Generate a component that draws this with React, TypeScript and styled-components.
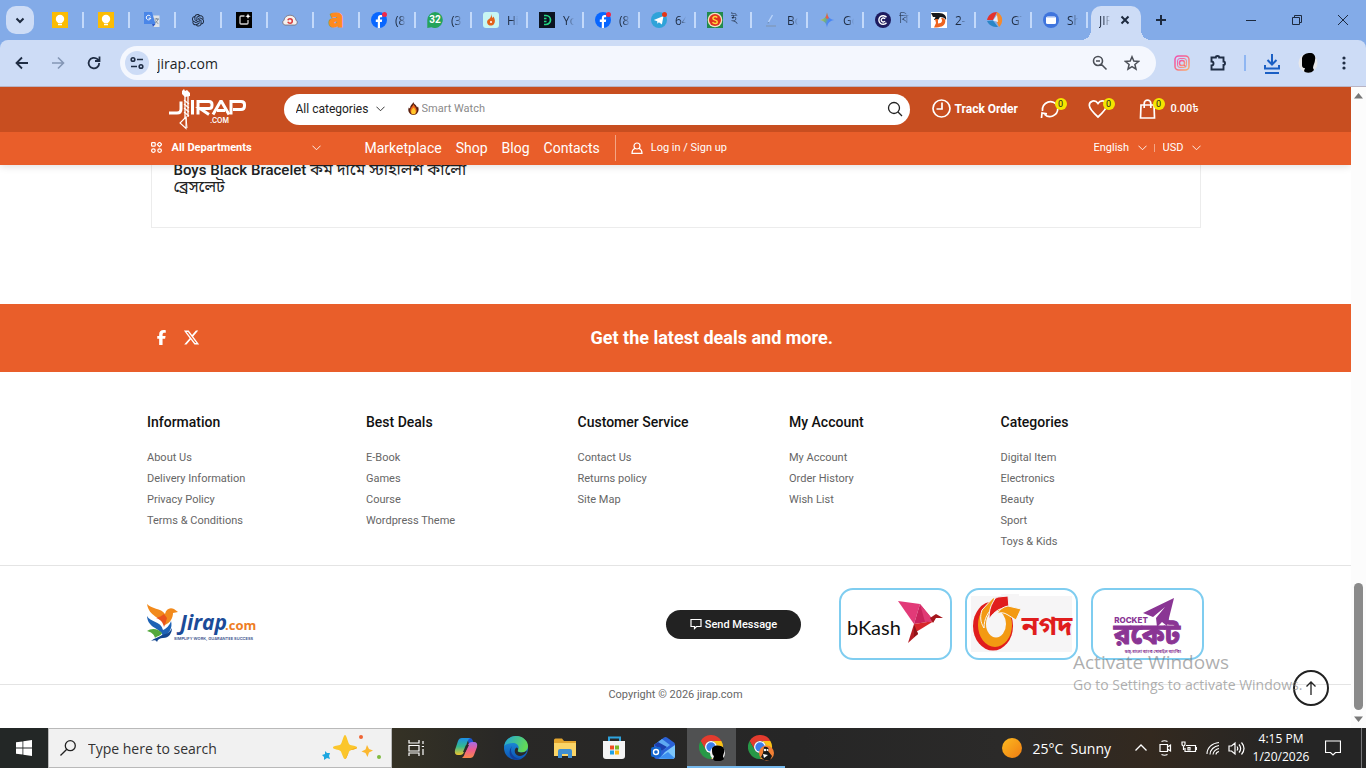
import React from 'react';
import styled, { createGlobalStyle } from 'styled-components';
import { AiOutlineOpenAI } from 'react-icons/ai';
import { FaFacebookF, FaXTwitter } from 'react-icons/fa6';

const ui = `"Open Sans", "Noto Sans", sans-serif`;
const site = `Roboto, "Noto Sans Bengali", "Noto Sans", sans-serif`;
const orange = '#e95e2a';

const GlobalStyle = createGlobalStyle`
  *, *::before, *::after { box-sizing: border-box; }
  body { margin: 0; background: #fff; font-family: ${site}; }
  button, input, select { font: inherit; color: inherit; margin: 0; padding: 0; border: 0; background: none; outline: none; }
  button { display: inline-flex; align-items: center; justify-content: center; cursor: pointer; }
  select { appearance: none; }
  a { color: inherit; text-decoration: none; }
  ul { list-style: none; margin: 0; padding: 0; }
  h2, h3, p { margin: 0; }
  svg { display: block; flex: none; }
`;

const Desktop = styled.div`
  display: flex;
  flex-direction: column;
  height: 100vh;
  overflow: hidden;
`;

/* ---------- browser window ---------- */

const BrowserFrame = styled.div`
  flex: none;
  background: #83abe8;
`;

const TabStrip = styled.div`
  display: flex;
  height: 40px;
  padding-left: 6px;
  font-family: ${ui};
  color: #1d2a3f;
`;

const TabSearch = styled.button`
  width: 28px;
  height: 28px;
  margin: 6px 4px 0 0;
  border-radius: 10px;
  background: #cddcf6;
`;

const Tab = styled.a<{ $wide?: boolean }>`
  display: flex;
  align-items: center;
  gap: 8px;
  width: ${(p) => (p.$wide ? 56 : 46)}px;
  height: 40px;
  padding-left: ${(p) => (p.$wide ? 11 : 14)}px;
  font-size: 12px;
  &::after {
    content: '';
    width: 2px;
    height: 16px;
    margin-left: auto;
    background: #c3d9fa;
  }
`;

const TabTitle = styled.span`
  width: 11px;
  margin-right: -8px;
  overflow: hidden;
  white-space: nowrap;
  mask-image: linear-gradient(90deg, #000 40%, transparent);
`;

const ActiveTab = styled.div`
  position: relative;
  display: flex;
  align-items: center;
  gap: 18px;
  width: 50px;
  height: 34px;
  margin: 6px 0 0 3px;
  padding: 0 0 6px 8px;
  border-radius: 10px 10px 0 0;
  background: #cddcf6;
  font-size: 12px;
  &::before, &::after {
    content: '';
    position: absolute;
    bottom: 0;
    width: 10px;
    height: 10px;
  }
  &::before { left: -10px; background: radial-gradient(circle at 0 0, transparent 10px, #cddcf6 10px); }
  &::after { right: -10px; background: radial-gradient(circle at 100% 0, transparent 10px, #cddcf6 10px); }
`;

const NewTab = styled.button`
  width: 28px;
  height: 28px;
  margin: 6px 0 0 6px;
`;

const WindowControls = styled.div`
  display: flex;
  margin-left: auto;
`;

const WindowButton = styled.button`
  width: 46px;
  height: 40px;
`;

const Toolbar = styled.div`
  display: flex;
  align-items: center;
  height: 47px;
  padding: 0 4px;
  border-bottom: 1px solid #b9b4c4;
  border-radius: 8px 8px 0 0;
  background: #cddcf6;
  color: #1f2d44;
  font-family: ${ui};
`;

const ToolButton = styled.button<{ $muted?: boolean }>`
  width: 36px;
  height: 34px;
  color: ${(p) => (p.$muted ? '#8496b5' : 'inherit')};
`;

const AddressBar = styled.label`
  display: flex;
  flex: 1;
  align-items: center;
  gap: 8px;
  height: 34px;
  margin: 0 8px;
  padding: 0 12px 0 5px;
  border-radius: 17px;
  background: #f4f7fe;
`;

const SiteInfo = styled.span`
  display: grid;
  place-items: center;
  width: 24px;
  height: 24px;
  border-radius: 50%;
  background: #cddcf6;
`;

const AddressInput = styled.input`
  flex: 1;
  min-width: 0;
  font-size: 14px;
  color: #1c1f26;
`;

const AddressButton = styled.button`
  width: 24px;
  height: 24px;
  color: #4b4f57;
`;

const ToolDivider = styled.span`
  width: 2px;
  height: 16px;
  margin: 0 8px;
  background: #8fb6f2;
`;

const Viewport = styled.div`
  display: flex;
  flex: 1;
  min-height: 0;
`;

const ScrollRail = styled.div`
  display: flex;
  flex: none;
  flex-direction: column;
  align-items: center;
  justify-content: space-between;
  width: 15px;
  padding: 6px 0;
  background: #fcfcfc;
`;

const ScrollThumb = styled.div`
  width: 9px;
  height: 127px;
  margin: auto 0 6px;
  border-radius: 5px;
  background: #8a8a8a;
`;

/* ---------- shop page ---------- */

const Page = styled.div`
  position: relative;
  display: flex;
  flex: 1;
  flex-direction: column;
  min-width: 0;
  overflow: hidden;
  background: #fff;
  color: #222;
`;

const Container = styled.div`
  display: flex;
  align-items: center;
  width: 100%;
  max-width: 1050px;
  margin: 0 auto;
`;

const SiteHeader = styled.header`
  position: relative;
  z-index: 1;
  flex: none;
  color: #fff;
  box-shadow: 0 1px 8px rgba(0, 0, 0, 0.14);
`;

const HeaderTop = styled.div`
  background: #c84e20;
  ${Container} { height: 45px; }
`;

const HeaderNav = styled.div`
  background: ${orange};
  ${Container} { height: 33px; padding-bottom: 2px; }
`;

const LogoLink = styled.a`
  width: 133px;
  padding-left: 16px;
`;

const SearchForm = styled.form`
  display: flex;
  flex: 1;
  align-items: center;
  height: 31px;
  padding: 0 7px 2px 12px;
  border-radius: 16px;
  background: #fff;
  color: #222;
`;

const CategorySelect = styled.select`
  width: 80px;
  font-size: 12px;
`;

const SearchInput = styled.input`
  flex: 1;
  min-width: 0;
  margin-left: 3px;
  font-size: 11px;
  &::placeholder { color: #8a8a8a; opacity: 1; }
`;

const HeaderActions = styled.div`
  display: flex;
  align-items: center;
  width: 291px;
  padding: 0 0 2px 22px;
`;

const TrackLink = styled.a`
  display: flex;
  align-items: center;
  gap: 4px;
  width: 108px;
  font-size: 12px;
  font-weight: 700;
  white-space: nowrap;
`;

const CounterLink = styled.a<{ $space: number }>`
  position: relative;
  display: flex;
  width: ${(p) => p.$space}px;
`;

const Counter = styled.span`
  position: absolute;
  top: -1px;
  left: 15px;
  width: 12px;
  height: 12px;
  border-radius: 50%;
  background: #f4e600;
  color: #222;
  font-size: 9px;
  line-height: 12px;
  text-align: center;
`;

const Amount = styled.span`
  font-size: 11px;
  font-weight: 500;
`;

const Departments = styled.button`
  gap: 10px;
  width: 170px;
  margin-right: 44px;
  font-size: 11px;
  font-weight: 700;
  svg:last-child { margin-left: auto; }
`;

const MainNav = styled.nav`
  display: flex;
  gap: 14px;
  padding-right: 15px;
  border-right: 1px solid #f3a585;
  font-size: 14px;
  line-height: 26px;
`;

const LoginLink = styled.a`
  display: flex;
  align-items: center;
  gap: 8px;
  padding-left: 15px;
  font-size: 11px;
`;

const Locale = styled.div`
  display: flex;
  align-items: center;
  margin-left: auto;
  font-size: 11px;
`;

const LocaleSelect = styled.select<{ $width: number }>`
  width: ${(p) => p.$width}px;
`;

const LocaleDivider = styled.span`
  width: 1px;
  height: 8px;
  margin: 0 8px 0 7px;
  background: #f3a585;
`;

const ProductCard = styled.article`
  flex: none;
  width: calc(100% - 40px);
  max-width: 1050px;
  height: 80px;
  margin: -17px auto 0;
  padding: 13px 22px;
  border: 1px solid #ececec;
`;

const ProductTitle = styled.h2`
  width: 300px;
  font-size: 15px;
  font-weight: 500;
  line-height: 17px;
`;

const BengaliName = styled.span`
  font-size: 16px;
  font-weight: 400;
  line-height: 1;
`;

const DealsBand = styled.section`
  flex: none;
  margin-top: 76px;
  background: ${orange};
  color: #fff;
  ${Container} { height: 68px; padding-bottom: 2px; }
`;

const Social = styled.div`
  display: flex;
  align-items: center;
  gap: 14px;
  width: 440px;
  padding-left: 3px;
`;

const DealsText = styled.p`
  font-size: 18px;
  font-weight: 700;
`;

const FooterColumns = styled.footer`
  display: grid;
  grid-template-columns: 219px repeat(4, 1fr);
  flex: none;
  width: 100%;
  max-width: 1073px;
  height: 193px;
  margin: 0 auto;
  padding: 40px 0 0 8px;
`;

const ColumnTitle = styled.h3`
  margin-bottom: 15px;
  color: #111;
  font-size: 14px;
  font-weight: 500;
  line-height: 20px;
`;

const ColumnLinks = styled.ul`
  color: #666;
  font-size: 11px;
  line-height: 21px;
`;

const Brands = styled.section`
  flex: none;
  border-top: 1px solid #e4e4e4;
  border-bottom: 1px solid #e4e4e4;
`;

const BrandsRow = styled.div`
  display: flex;
  align-items: center;
  width: 100%;
  max-width: 1057px;
  height: 118px;
  margin: 0 auto;
  padding-bottom: 2px;
`;

const SendButton = styled.button`
  gap: 3px;
  width: 135px;
  height: 29px;
  margin: 0 38px 0 auto;
  border-radius: 15px;
  background: #222;
  color: #fff;
  font-size: 11px;
  font-weight: 500;
`;

const Payments = styled.div`
  display: flex;
  gap: 13px;
`;

const PaymentCard = styled.a`
  display: grid;
  place-items: center;
  width: 113px;
  height: 72px;
  border: 2px solid #7fcdf0;
  border-radius: 14px;
  overflow: hidden;
`;

const Copyright = styled.p`
  color: #666;
  font-size: 11px;
  line-height: 20px;
  text-align: center;
`;

const ToTop = styled.button`
  position: absolute;
  right: 22px;
  bottom: 22px;
  width: 36px;
  height: 36px;
  border: 2px solid #222;
  border-radius: 50%;
`;

const Activation = styled.div`
  position: absolute;
  left: 1073px;
  bottom: 33px;
  color: rgba(120, 120, 120, 0.6);
  font-family: ${ui};
  font-size: 14px;
  line-height: 20px;
  white-space: nowrap;
  pointer-events: none;
`;

const ActivationTitle = styled.p`
  font-size: 19px;
  line-height: 26px;
`;

/* ---------- taskbar ---------- */

const Taskbar = styled.div`
  display: flex;
  flex: none;
  height: 40px;
  background: linear-gradient(90deg, #232726 0, #232726 48px, #353225 392px, #292826 500px, #262626 800px, #2b2a29 1000px, #33291f 1150px, #252525 1290px);
  color: #fff;
  font-family: ${ui};
`;

const TaskButton = styled.button<{ $width?: number; $active?: boolean; $open?: boolean }>`
  width: ${(p) => p.$width ?? 49}px;
  height: 40px;
  background: ${(p) => (p.$active ? '#505152' : 'transparent')};
  box-shadow: ${(p) => (p.$open ? 'inset 0 -2px 0 #76b9ed' : 'none')};
`;

const TaskSearch = styled.label`
  display: flex;
  align-items: center;
  width: 344px;
  padding: 0 8px 0 11px;
  border: 1px solid #b9b9b9;
  background: #f1f1f1;
`;

const TaskSearchInput = styled.input`
  flex: 1;
  min-width: 0;
  margin-left: 12px;
  font-size: 14px;
  &::placeholder { color: #333; opacity: 1; }
`;

const Tray = styled.div`
  display: flex;
  align-items: center;
  margin-left: auto;
`;

const Weather = styled.button`
  gap: 10px;
  margin-right: 18px;
  font-size: 14px;
  white-space: pre;
`;

const Clock = styled.time`
  width: 66px;
  font-size: 12px;
  line-height: 18px;
  text-align: center;
`;

const ShowDesktop = styled.span`
  width: 5px;
  height: 40px;
  margin-left: 9px;
  border-left: 1px solid #77777a;
`;

/* ---------- drawings ---------- */

const Icon = ({ size = 16, w = 2, box = 16, d, fill = 'none' }: { size?: number; w?: number; box?: number; d: string; fill?: string }) => (
  <svg width={size} height={size} viewBox={`0 0 ${box} ${box}`} fill={fill} stroke="currentColor" strokeWidth={w}>
    <path d={d} />
  </svg>
);

const Chevron = ({ size = 9 }: { size?: number }) => <Icon size={size} box={10} w={1} d="M.5 3 5 7.5 9.5 3" />;

const Fav = ({ children }: { children: React.ReactNode }) => (
  <svg width="16" height="16" viewBox="0 0 16 16">{children}</svg>
);

const KeepIcon = () => (
  <Fav>
    <path fill="#fbbc04" d="M0 0h16v16H0z" />
    <circle cx="8" cy="7" r="4.2" fill="#fff" />
    <path fill="#fff" d="M6 9h4v2.2H6zM6 12h4v1.3H6z" />
  </Fav>
);

const TranslateIcon = () => (
  <Fav>
    <path fill="#dfe3e8" d="M6 3.500h9.500V15H9z" />
    <path fill="#4a86e8" d="M0 0h8l3.500 12H0z" />
    <path fill="#2a56c6" d="m8 12 3.500 0L9 15z" />
    <path d="M6.500 4.300A2.300 2.300 0 1 0 6.800 6.200H4.700" fill="none" stroke="#fff" />
    <path d="M10.500 7h4.500M12.700 6v1M14 7c-.4 2-2 3.500-3 4M11.500 8.500c.6 1.500 1.600 2.500 2.800 3" fill="none" stroke="#71808f" strokeWidth=".9" />
  </Fav>
);

const AppIcon = () => (
  <Fav>
    <path d="M0 0h16v16H0z" />
    <path d="M8.500 4H5q-1 0-1 1v6q0 1 1 1h6q1 0 1-1V8" fill="none" stroke="#cfcfcf" strokeWidth="1.300" />
    <path fill="#fff" d="m12 1.500.8 1.900 1.900.8-1.900.8-.8 1.900-.8-1.900-1.900-.8 1.900-.8z" />
  </Fav>
);

const CloudIcon = () => (
  <Fav>
    <path d="M3 13A2.600 2.600 0 0 1 2 8.200C2.500 5 5 3.200 8 3.200S13.500 5 14 8.200A2.600 2.600 0 0 1 13 13z" fill="#f6f1ee" stroke="#6b5f65" strokeWidth=".7" />
    <circle cx="8" cy="9" r="2.300" fill="none" stroke="#d8383a" strokeWidth="1.500" strokeDasharray="5.800 1.400" />
  </Fav>
);

const LetterAIcon = () => (
  <Fav>
    <text x="8" y="15" fill="#ff8a1e" stroke="#ff8a1e" strokeWidth="1" fontFamily="Open Sans, sans-serif" fontWeight="800" fontSize="24" textAnchor="middle">a</text>
  </Fav>
);

const FacebookIcon = () => (
  <Fav>
    <circle cx="8" cy="8" r="8" fill="#0866ff" />
    <path fill="#fff" d="M6.800 16V10H4.800V7.500h2V6.200C6.800 3.800 8 3 9.500 3c.7 0 1.300.1 1.700.2v2.100H10c-.8 0-1 .4-1 1v1.200h2.200L10.800 10H9v6z" />
    <circle cx="13.500" cy="2.500" r="2.500" fill="#f02849" />
  </Fav>
);

const CountIcon = () => (
  <Fav>
    <path d="M8 0a8 8 0 1 1-3.500 15.300L.3 16V8A8 8 0 0 1 8 0z" fill="#25a35b" />
    <text x="8" y="11" fill="#fff" fontFamily="Roboto, sans-serif" fontWeight="700" fontSize="10" textAnchor="middle">32</text>
  </Fav>
);

const FlameTabIcon = () => (
  <Fav>
    <rect width="16" height="16" rx="3" fill="#c7f6f3" />
    <path fill="#e2621b" d="M8.500 2c.3 2 .3 3 1 4l1-1.500c1.800 3 1.800 5.500.5 7.500s-4.800 2.200-6.200.3C3.500 10 4 8 6 7c1.500-1 2.300-2.500 2.500-5z" />
    <circle cx="8" cy="10" r="1" fill="#fff" />
  </Fav>
);

const DIcon = () => (
  <Fav>
    <path fill="#0b1320" d="M0 0h16v16H0z" />
    <path d="M5 3.500h2a4.500 4.500 0 0 1 0 9H5M5 6.500h2.500M5 9.500h2.500" fill="none" stroke="#24d683" strokeWidth="1.700" />
  </Fav>
);

const TelegramIcon = () => (
  <Fav>
    <circle cx="8" cy="8" r="8" fill="#2fa3d9" />
    <path fill="#fff" d="m2.800 8 9.700-4-1.600 8.500-3-2.200-1.500 1.400-.2-2.500z" />
    <circle cx="13.500" cy="2.500" r="2.500" fill="#e53516" />
  </Fav>
);

const SealIcon = () => (
  <Fav>
    <path fill="#218a4c" d="M0 0h16v16H0z" />
    <circle cx="8" cy="8" r="7.300" fill="#f4e3c0" />
    <circle cx="8" cy="8" r="6" fill="#e03320" />
    <path d="M10.300 5.500C8 3.500 5.500 5 6 6.700s4.300 1.200 4.300 3.200S7 12 5.500 10.300" fill="none" stroke="#ffd93b" strokeWidth="1.500" />
  </Fav>
);

const DraftIcon = () => (
  <Fav>
    <path d="M3 14h10" stroke="#7f93ad" strokeWidth="1" />
    <path d="m5.500 10 4-7" stroke="#b9d4fa" strokeWidth="1.400" />
    <path d="m5 11.500.5-1.500" stroke="#6f8fb9" />
  </Fav>
);

const GeminiIcon = () => (
  <Fav>
    <defs>
      <linearGradient id="gem" x1="0" y1=".3" x2="1" y2=".7">
        <stop offset="0" stopColor="#f3c53c" /><stop offset=".4" stopColor="#6fb27d" /><stop offset=".6" stopColor="#4d86f5" /><stop offset="1" stopColor="#4285f4" />
      </linearGradient>
    </defs>
    <path fill="url(#gem)" d="M8 .5C8.600 5 11 7.400 15.500 8 11 8.600 8.600 11 8 15.500 7.400 11 5 8.600.5 8 5 7.400 7.400 5 8 .5z" />
    <path fill="#ea5a4b" d="M8 .5C8.300 3 9 4.800 10 6L8 7 6.400 5.500C7.300 4.500 7.800 2.500 8 .5z" />
  </Fav>
);

const CIcon = () => (
  <Fav>
    <circle cx="8" cy="8" r="8" fill="#1e1b5e" />
    <path d="M11.500 5.300a4.300 4.300 0 1 0 0 5.400M10 7a2 2 0 1 0 0 2" fill="none" stroke="#fff" strokeWidth="1.400" />
  </Fav>
);

const OrangeDIcon = () => (
  <Fav>
    <path fill="#fff" d="M0 0h16v16H0z" />
    <path fill="#18181c" d="M0 1h8c5 0 8 3 7 7-1-2-3-3-6-3L7 8H3l1.500-3H2z" />
    <path fill="#ee6420" d="M4 7h3v4.500c4 0 5-3 3-5.500 4 0 5 2 4 5-1 3-4 4.500-11 4.500L5 11z" />
  </Fav>
);

const SwirlIcon = () => (
  <Fav>
    <path fill="#e4322c" d="M0 8C1 3 5 0 10 0L6 8z" />
    <path fill="#f58a2c" d="M10 0c6 3 7 10 2 15L9 8z" />
    <path fill="#2a86c7" d="M0 9l6-.5L11 15C5 15 2 13 0 9z" />
    <path fill="#e8eefb" d="m6 8.500 4-5.500 1 7z" />
  </Fav>
);

const SheetIcon = () => (
  <Fav>
    <circle cx="8" cy="8" r="8" fill="#3e74dd" />
    <rect x="3" y="4.500" width="10" height="7.500" rx="1.500" fill="#fff" />
    <path d="M3.500 5.500h9" stroke="#c9d9f8" />
  </Fav>
);

const narrowTabs = [KeepIcon, KeepIcon, TranslateIcon, () => <AiOutlineOpenAI size={16} />, AppIcon, CloudIcon, LetterAIcon];
const wideTabs: [React.FC, string][] = [
  [FacebookIcon, '(8'], [CountIcon, '(3'], [FlameTabIcon, 'Hi'], [DIcon, 'Yo'], [FacebookIcon, '(8'], [TelegramIcon, '64'],
  [SealIcon, 'ই'], [DraftIcon, 'Bo'], [GeminiIcon, 'Go'], [CIcon, 'বি'], [OrangeDIcon, '2-'], [SwirlIcon, 'GT'], [SheetIcon, 'Sh'],
];

const ProfilePic = () => (
  <svg width="20" height="20" viewBox="0 0 20 20">
    <circle cx="10" cy="10" r="9.500" fill="#e8e8ea" />
    <path d="M4 5C5 1 9 0 12 0c4 0 6 3 5 7 0 3-2 5-2 8l1 2c-3 4-9 3-10 1l1-3c-3 0-3-2-3-4z" />
  </svg>
);

const InstagramIcon = () => (
  <svg width="16" height="16" viewBox="0 0 16 16" fill="none" stroke="url(#ig)" strokeWidth="1.500">
    <defs><linearGradient id="ig" x1="0" y1="0" x2="1" y2="1"><stop offset="0" stopColor="#f04fb0" /><stop offset=".5" stopColor="#f76f85" /><stop offset="1" stopColor="#fbb06a" /></linearGradient></defs>
    <rect x="1" y="1" width="14" height="14" rx="3.500" />
    <rect x="3.500" y="3.500" width="9" height="9" rx="2.500" strokeWidth=".9" />
    <circle cx="8" cy="8" r="2.600" />
    <path d="m10 10 2 2" />
  </svg>
);

const JirapLogo = () => (
  <svg width="80" height="42" viewBox="0 1 80 42" fill="none" stroke="#fff">
    <g strokeWidth="3">
      <path d="M14 13.500v7.500q0 4-4 4H2" />
      <path d="M25.500 12v14.500" />
      <path d="M31 26.500V13.500h11q3 0 3 3v1q0 3-3 3h-9l9 6" />
      <path d="m46 26.500 7.500-13h1l7.500 13M50 22.500h8" />
      <path d="M64 26.500V13.500h10q3.500 0 3.500 3v1.500q0 3.500-3.500 3.500h-8" />
    </g>
    <path d="M18 7v24M21 7v22" strokeWidth="1.300" />
    <path d="m17 12 5 4m-5 0 5 4m-5 0 5 4m-5 0 5 4" strokeWidth="1.100" />
    <path d="m15 3 2-2 1 2 2-1 3 3v3l-5 1-3-3z" fill="#fff" stroke="none" />
    <path d="m19 29-6 6 6 5.500z" strokeWidth="1.100" />
    <path d="m19 29 1 11" strokeWidth="1" />
    <text x="43" y="35" fill="#fff" stroke="none" fontFamily="Inter, sans-serif" fontSize="7" fontWeight="600">.COM</text>
  </svg>
);

const Flame = () => (
  <svg width="11" height="13" viewBox="0 0 11 13">
    <path d="M5.500 0c0 2.500 3 2.500 3.500 5.500L10 4.500c1.800 4-.5 8.500-4.500 8.500S-.8 9 .8 5.500L2 6.500C2 3.500 4 2.500 5.500 0z" fill="#5a2010" />
    <path d="M5.500 2c.2 2 3 3 3.200 6.500 0 2-1 3.700-3.200 3.700S2.300 10.800 2.300 8.500c0-3 2.700-4 3.200-6.500z" fill="#f0681c" />
    <path d="M5.500 5.500c1.700 1.500 2.300 3 2.300 4.400s-1 2.300-2.300 2.300-2.300-.9-2.300-2.300.6-2.700 2.300-4.400z" fill="#ffc82c" />
  </svg>
);

const GridDots = () => (
  <svg width="11" height="11" viewBox="0 0 11 11" fill="none" stroke="#fff" strokeWidth="1.200">
    <rect x=".6" y=".6" width="3.600" height="3.600" rx=".8" />
    <path d="m8.500.2 2.200 2.200-2.200 2.200-2.200-2.200z" />
    <circle cx="2.400" cy="8.600" r="1.800" />
    <circle cx="8.600" cy="8.600" r="1.800" />
  </svg>
);

const JirapColorLogo = () => (
  <svg width="110" height="42" viewBox="0 0 110 42">
    <path fill="#f28a1c" d="M0 1c4 5 14 4 18 10 1-5 5-7 9-5l4 3-5 1c0 5-3 10-8 12C14 14 2 14 0 1z" />
    <path fill="#e9541d" d="m17 11 3 4c-1 4-2 7-3 9-1-5-4-8-8-9 3-1 6-2 8-4z" />
    <path fill="#1e62b5" d="M0 13c3 6 14 5 16 14 3-1 7-5 8-9 2 7-2 13-8 15C13 24 1 26 0 13z" />
    <path fill="#54a83c" d="M0 28c4-3 11-3 15 2-1 3-5 3-7 5-1-4-4-6-8-7z" />
    <path fill="#12458f" d="M4 38c3-3 7-3 11-6 5-1 8-3 10-7 0 5-3 10-9 10-3 0-5 1-6 4-1-2-3-2-6-1z" />
    <text x="33" y="27" fill="#1b4b98" fontFamily="Open Sans, sans-serif" fontStyle="italic" fontWeight="700" fontSize="21">Jirap</text>
    <text x="78" y="27" fill="#ee7d24" fontFamily="Open Sans, sans-serif" fontWeight="700" fontSize="13">.com</text>
    <text x="27" y="37" fill="#39518d" fontFamily="Inter, sans-serif" fontWeight="600" fontSize="4">SIMPLIFY WORK, GUARANTEE SUCCESS</text>
  </svg>
);

const BkashLogo = () => (
  <svg width="98" height="50" viewBox="0 0 98 50">
    <text x="0" y="36" fill="#111" fontFamily="Lato, sans-serif" fontSize="20">bKash</text>
    <path fill="#e23a78" d="m51 2 22 3-6 20z" />
    <path fill="#c9235d" d="m73 5 14 17-20 3z" />
    <path fill="#e03a75" d="m73 5 14 17-9 1z" />
    <path fill="#b51c23" d="m67 25-6 19 10-9z" />
    <path fill="#d8262c" d="m67 25 20-3-18 11z" />
    <path fill="#8f1519" d="m67 25 4 10-4 3z" />
    <path fill="#a5171d" d="m83 19 6-4 7 4-7 0-3 5z" />
  </svg>
);

const NagadLogo = () => (
  <svg width="109" height="68" viewBox="0 0 109 68">
    <path fill="#f6f5f6" d="M4 6h101v56H4z" />
    <ellipse cx="26" cy="36" rx="20" ry="24.500" fill="#e01d1d" />
    <ellipse cx="28" cy="35" rx="17" ry="22" fill="#f39a12" />
    <path fill="#f6f5f6" d="M34 4h18v22L38 22z" />
    <ellipse cx="29" cy="34" rx="10" ry="13.500" fill="#f6f5f6" />
    <path fill="#f39a12" stroke="#f6f5f6" d="M15 20 27 7l1 9c-7 5-11 13-11 22-4-6-4-12-2-18z" />
    <path fill="#e01d1d" stroke="#f6f5f6" d="M26 12q2-5 5-5l10-1 1 12c-9-1-14 3-20 11 0-7 1-12 4-17z" />
    <path fill="#f39a12" stroke="#f6f5f6" d="m41 16 13 3-5 11-8-5q-6-4-11-1 4-7 11-8z" />
    <text x="80" y="45" fill="#e01d1d" fontFamily="Noto Sans Bengali, sans-serif" fontWeight="700" fontSize="27" textAnchor="middle">নগদ</text>
  </svg>
);

const RocketLogo = () => (
  <svg width="109" height="68" viewBox="0 0 109 68">
    <path fill="#8a3594" d="m81 8-31 15 10 4 12-10-9 11 1 9 5-5 5 4z" />
    <text x="38" y="33" fill="#8a3594" fontFamily="Inter, sans-serif" fontWeight="800" fontSize="8" textAnchor="middle">ROCKET</text>
    <text x="54" y="54" fill="#8a3594" stroke="#8a3594" strokeWidth="1" fontFamily="Noto Sans Bengali, sans-serif" fontWeight="700" fontSize="28" textAnchor="middle">রকেট</text>
    <text x="60" y="63" fill="#8a3594" fontFamily="Noto Sans Bengali, sans-serif" fontWeight="700" fontSize="4" textAnchor="middle">ডাচ্-বাংলা ব্যাংক মোবাইল ব্যাংকিং</text>
  </svg>
);

const Sparkles = () => (
  <svg width="62" height="30" viewBox="0 0 62 30">
    <path fill="#fbc62c" d="M24 2c1.500 0 3 8 4.500 9.500S36 12.500 36 14.500s-6 2-7.500 3.500S26 26 24 26s-3-6.500-4.500-8S12 16.500 12 14.500s6-1.500 7.500-3S22.500 2 24 2z" />
    <path fill="#f5a81c" d="M36 14.500c0 2-6 2-7.500 3.500S26 26 24 26c4-6 2-9 12-11.500z" />
    <path fill="#fbb830" d="m46 12 2 4 4 1.500-4 2L46.500 24l-2-4-4-1.500 4-2z" />
    <path fill="#1ea7e0" d="m4 18 2 2 3 0-1 3 1 3-3-1-3 2 0-3-2-2 3-1z" />
    <circle cx="40" cy="4" r="2" fill="#ef6433" />
    <circle cx="58" cy="24" r="2" fill="#7fbb42" />
  </svg>
);

const ChromeIcon = ({ person }: { person: 'dark' | 'orange' }) => {
  const arm = 'M12 6H22.400A12 12 0 0 0 1.600 6L6.800 15A6 6 0 0 1 12 6z';
  return (
    <svg width="26" height="26" viewBox="0 0 26 26">
      <path d={arm} fill="#e33b2e" />
      <path d={arm} fill="#fbc116" transform="rotate(120 12 12)" />
      <path d={arm} fill="#279847" transform="rotate(240 12 12)" />
      <circle cx="12" cy="12" r="6" fill="#fff" />
      <circle cx="12" cy="12" r="4.700" fill="#3b7ded" />
      {person === 'dark' ? (
        <>
          <circle cx="18.500" cy="18" r="7.500" fill="#eee" />
          <path d="M13 14c0-4 10-5 12 0 1 4-1 5-1 8l1 2c-3 3-10 3-11 0l1-3c-2-1-2-4-2-7z" />
        </>
      ) : (
        <>
          <circle cx="18.500" cy="18" r="7.500" fill="#f28034" />
          <path d="M16 12c3-1 6 1 4 4l4 5-2 4h-6l-3-3 2-4z" fill="#181818" />
          <circle cx="17" cy="15" r="1.200" fill="#fff" /><circle cx="19.500" cy="15" r="1" fill="#fff" />
          <path d="m15 19 5 1-4 3z" fill="#fff" />
        </>
      )}
    </svg>
  );
};

const CopilotIcon = () => (
  <svg width="24" height="24" viewBox="0 0 24 24">
    <defs>
      <linearGradient id="cpa" x1="0" y1="0" x2="0" y2="1"><stop offset="0" stopColor="#1d8fe8" /><stop offset=".5" stopColor="#34b98e" /><stop offset="1" stopColor="#f0c42c" /></linearGradient>
      <linearGradient id="cpb" x1="0" y1="0" x2="0" y2="1"><stop offset="0" stopColor="#a56be8" /><stop offset=".5" stopColor="#ee5c8d" /><stop offset="1" stopColor="#f8894a" /></linearGradient>
    </defs>
    <path fill="#1c55cd" d="M13 2h3q2 0 3 3l1 3h-5z" />
    <path fill="url(#cpa)" d="M8 2h8q-2 1-3 5l-3 9q-1 3-4 3H4q-4 0-3-5L4 5q1-3 4-3z" />
    <path fill="url(#cpb)" d="M16 22H8q2-1 3-5l3-8q1-3 4-3h2q4 0 3 5l-3 8q-1 3-4 3z" />
    <path fill="#2b2a28" d="m12 9-3 7h2.500L15 9z" />
  </svg>
);

const EdgeIcon = () => (
  <svg width="24" height="24" viewBox="0 0 24 24">
    <defs>
      <linearGradient id="eda" x1="0" y1="0" x2="1" y2=".3"><stop offset="0" stopColor="#1fa4dc" /><stop offset="1" stopColor="#62d957" /></linearGradient>
      <linearGradient id="edb" x1="0" y1="0" x2="0" y2="1"><stop offset="0" stopColor="#1f9ae0" /><stop offset="1" stopColor="#0c52b4" /></linearGradient>
    </defs>
    <circle cx="12" cy="12" r="12" fill="url(#edb)" />
    <path fill="url(#eda)" d="M.2 10C1 4 6 0 12 0c7 0 12 5 12 10 0 4-3 6.500-6.500 6.500-3 0-4.500-1-3.500-2.500 2-4-1-7-5-7-4 0-7 1-8.800 3z" />
    <path fill="#2b2a28" d="M14 14c-1 1.500.5 2.500 3.500 2.500 2.500 0 4-.8 5.300-2 .5 1-2.800 5.500-6.800 5.500-5 0-7-6-3.500-8.500 1 0 2 1 1.500 2.500z" />
    <path fill="#123f9b" d="M8 10c-3 6 1 12 8 13-8 3-14-5-8-13z" />
  </svg>
);

const FolderIcon = () => (
  <svg width="22" height="20" viewBox="0 0 22 20">
    <path fill="#e3a52e" d="M0 2q0-1.500 1.500-1.500H8L10 3h12v5H0z" />
    <path fill="#fbd567" d="M0 5h22v13H0z" />
    <path fill="#3f8fd2" d="M4 20v-7q0-2 2-2h10q2 0 2 2v7h-4v-4H8v4z" />
  </svg>
);

const StoreIcon = () => (
  <svg width="24" height="24" viewBox="0 0 24 24">
    <path d="M7 6V1.500h11V6" fill="none" stroke="#2ea3dd" strokeWidth="2" />
    <path fill="#f4f4f4" d="M1 5h22v15q0 3-3 3H4q-3 0-3-3z" />
    <path fill="#f04e23" d="M8 9.500h4v4H8z" /><path fill="#7cb928" d="M13 9.500h4v4h-4z" />
    <path fill="#1fa1e6" d="M8 14.500h4v4H8z" /><path fill="#fdb813" d="M13 14.500h4v4h-4z" />
  </svg>
);

const OutlookIcon = () => (
  <svg width="24" height="24" viewBox="0 0 24 24">
    <path fill="#2a62d8" d="M3 9 13 1.600q1.500-1 3 0L23 6.500q1 .8 1 2V20q0 3-3 3H6q-3 0-3-3z" />
    <path fill="#5ea9f3" d="m3 9 8-6 8 6-8 6z" />
    <path fill="#1b3fae" d="m3 9 4-3 9 5-5 4z" />
    <path fill="#7cc6fb" d="m14 16 10-7v11q0 3-3 3H8z" />
    <path fill="#3c8ff0" d="M7 22.500 17 16l6 5.500q-1 1.500-2 1.500z" />
    <rect x="0" y="11" width="10" height="10" rx="2" fill="#1466ce" />
    <circle cx="5" cy="16" r="2.500" fill="none" stroke="#fff" strokeWidth="1.400" />
  </svg>
);

/* ---------- page content ---------- */

const columns = [
  { title: 'Information', links: ['About Us', 'Delivery Information', 'Privacy Policy', 'Terms & Conditions'] },
  { title: 'Best Deals', links: ['E-Book', 'Games', 'Course', 'Wordpress Theme'] },
  { title: 'Customer Service', links: ['Contact Us', 'Returns policy', 'Site Map'] },
  { title: 'My Account', links: ['My Account', 'Order History', 'Wish List'] },
  { title: 'Categories', links: ['Digital Item', 'Electronics', 'Beauty', 'Sport', 'Toys & Kids'] },
];

const Browser = () => (
  <BrowserFrame>
    <TabStrip>
      <TabSearch aria-label="Search tabs"><Icon size={12} box={12} w={2} d="m2.500 4.500 3.500 3.500 3.500-3.500" /></TabSearch>
      {narrowTabs.map((Fi, i) => <Tab key={i} href="#" aria-label={`Pinned tab ${i + 1}`}><Fi /></Tab>)}
      {wideTabs.map(([Fi, title], i) => <Tab key={i} href="#" $wide><Fi /><TabTitle>{title}</TabTitle></Tab>)}
      <ActiveTab>
        <TabTitle>JIRAP</TabTitle>
        <button aria-label="Close tab"><Icon size={10} box={10} d="m1.500 1.500 7 7m0-7-7 7" /></button>
      </ActiveTab>
      <NewTab aria-label="New tab"><Icon size={12} box={12} d="M6 1v10M1 6h10" /></NewTab>
      <WindowControls>
        <WindowButton aria-label="Minimize"><Icon size={10} box={10} w={1} d="M0 5.500h10" /></WindowButton>
        <WindowButton aria-label="Restore"><Icon size={10} box={10} w={1} d="M.5 2.500h7v7h-7zM2.500 2.500v-2h7v7h-2" /></WindowButton>
        <WindowButton aria-label="Close"><Icon size={10} box={10} w={1} d="m0 0 10 10M10 0 0 10" /></WindowButton>
      </WindowControls>
    </TabStrip>
    <Toolbar>
      <ToolButton aria-label="Back"><Icon d="M14 8H3m5-5.500L2.500 8 8 13.500" w={1.8} /></ToolButton>
      <ToolButton aria-label="Forward" $muted><Icon d="M2 8h11M8 2.500 13.500 8 8 13.500" w={1.6} /></ToolButton>
      <ToolButton aria-label="Reload"><Icon d="M13.200 8A5.300 5.300 0 1 1 11.500 4.200L13 5.500M13.500 1.500v4.500H9" w={1.8} /></ToolButton>
      <AddressBar>
        <SiteInfo>
          <svg width="14" height="14" viewBox="0 0 14 14" fill="none" stroke="currentColor" strokeWidth="1.600">
            <circle cx="3" cy="3.500" r="1.800" /><path d="M7 3.500h6M1 10.500h6" /><circle cx="11" cy="10.500" r="1.800" />
          </svg>
        </SiteInfo>
        <AddressInput aria-label="Address" defaultValue="jirap.com" />
        <AddressButton aria-label="Zoom"><Icon d="M10.500 6a4.500 4.500 0 1 1-9 0 4.500 4.500 0 0 1 9 0zM9.300 9.300 14.500 14.500M4 6h4" w={1.6} /></AddressButton>
        <AddressButton aria-label="Bookmark"><Icon d="m8 1.800 1.800 4.300 4.700.4-3.600 3 1.100 4.600L8 11.700l-4 2.400 1.100-4.600-3.600-3 4.700-.4z" w={1.5} /></AddressButton>
      </AddressBar>
      <ToolButton aria-label="Instagram extension"><InstagramIcon /></ToolButton>
      <ToolButton aria-label="Extensions"><Icon size={18} box={18} w={1.9} d="M2.500 3.500h4.300q0-1.500 1.700-1.500t1.700 1.500H14.500V7.500q1.500 0 1.500 1.700t-1.500 1.700v4.600h-12V11.500q2 0 2-2t-2-2z" /></ToolButton>
      <ToolDivider />
      <ToolButton aria-label="Downloads"><svg width="18" height="22" viewBox="0 0 18 22" fill="none" stroke="#1a5fc4" strokeWidth="2"><path d="M9 2v10M4.500 8 9 12.500 13.500 8M2 13v3.500h14V13M2 21h14" /></svg></ToolButton>
      <ToolButton aria-label="Profile"><ProfilePic /></ToolButton>
      <ToolButton aria-label="Menu"><svg width="4" height="16" fill="currentColor"><circle cx="2" cy="3" r="1.600" /><circle cx="2" cy="8" r="1.600" /><circle cx="2" cy="13" r="1.600" /></svg></ToolButton>
    </Toolbar>
  </BrowserFrame>
);

const ShopHeader = () => (
  <SiteHeader>
    <HeaderTop>
      <Container>
        <LogoLink href="#" aria-label="Jirap.com"><JirapLogo /></LogoLink>
        <SearchForm>
          <CategorySelect aria-label="Category"><option>All categories</option></CategorySelect>
          <Chevron />
          <svg width="23" height="1" />
          <Flame />
          <SearchInput aria-label="Search products" placeholder="Smart Watch" />
          <button type="submit" aria-label="Search"><Icon w={1.3} d="M12.500 7a5.500 5.500 0 1 1-11 0 5.500 5.500 0 0 1 11 0zM11 11l4 4" /></button>
        </SearchForm>
        <HeaderActions>
          <TrackLink href="#"><Icon size={19} box={19} w={1.7} d="M18 9.500a8.500 8.500 0 1 1-17 0 8.500 8.500 0 0 1 17 0zM10 3.500v6.500H4.500" />Track Order</TrackLink>
          <CounterLink href="#" $space={48} aria-label="Compare"><Icon size={20} box={20} w={1.7} d="M2.500 12A8 8 0 0 1 17.500 7M17.800 9.500A8 8 0 0 1 4 15M1.500 19l.5-5 5 .8" /><Counter>0</Counter></CounterLink>
          <CounterLink href="#" $space={50} aria-label="Wish list"><Icon size={20} box={20} w={1.7} d="M10 18C5 13.500 1.300 10 1.300 6.300 1.300 2 7 0 10 4.500 13 0 18.700 2 18.700 6.300 18.700 10 15 13.500 10 18z" /><Counter>0</Counter></CounterLink>
          <CounterLink href="#" $space={33} aria-label="Cart"><Icon size={20} box={20} w={1.7} d="M3 6h13l.5 13h-14zM6.200 9V4.500a3.300 3.300 0 0 1 6.600 0V9" /><Counter>0</Counter></CounterLink>
          <Amount>0.00৳</Amount>
        </HeaderActions>
      </Container>
    </HeaderTop>
    <HeaderNav>
      <Container>
        <Departments><GridDots />All Departments<Chevron /></Departments>
        <MainNav>
          {['Marketplace', 'Shop', 'Blog', 'Contacts'].map((t) => <a key={t} href="#">{t}</a>)}
        </MainNav>
        <LoginLink href="#"><Icon size={12} box={12} w={1.2} d="M9 4a3 3 0 1 1-6 0 3 3 0 0 1 6 0zM3.800 6.500C2 7.300 1 9 1 11.300h10C11 9 10 7.300 8.200 6.500" />Log in / Sign up</LoginLink>
        <Locale>
          <LocaleSelect $width={44} aria-label="Language"><option>English</option></LocaleSelect><Chevron />
          <LocaleDivider />
          <LocaleSelect $width={29} aria-label="Currency"><option>USD</option></LocaleSelect><Chevron />
        </Locale>
      </Container>
    </HeaderNav>
  </SiteHeader>
);

const ShopFooter = () => (
  <>
    <DealsBand>
      <Container>
        <Social>
          <a href="#" aria-label="Facebook"><FaFacebookF size={15} /></a>
          <a href="#" aria-label="X"><FaXTwitter size={17} /></a>
        </Social>
        <DealsText>Get the latest deals and more.</DealsText>
      </Container>
    </DealsBand>
    <FooterColumns>
      {columns.map((c) => (
        <div key={c.title}>
          <ColumnTitle>{c.title}</ColumnTitle>
          <ColumnLinks>{c.links.map((l) => <li key={l}><a href="#">{l}</a></li>)}</ColumnLinks>
        </div>
      ))}
    </FooterColumns>
    <Brands>
      <BrandsRow>
        <a href="#" aria-label="Jirap.com home"><JirapColorLogo /></a>
        <SendButton><Icon size={12} box={12} w={1.2} d="M1 1.500h10v7H6.500l-2 2v-2H1z" />Send Message</SendButton>
        <Payments>
          <PaymentCard href="#" aria-label="bKash"><BkashLogo /></PaymentCard>
          <PaymentCard href="#" aria-label="Nagad"><NagadLogo /></PaymentCard>
          <PaymentCard href="#" aria-label="Rocket"><RocketLogo /></PaymentCard>
        </Payments>
      </BrandsRow>
    </Brands>
    <Copyright>Copyright © 2026 jirap.com</Copyright>
  </>
);

const WindowsTaskbar = () => (
  <Taskbar>
    <TaskButton $width={48} aria-label="Start"><svg width="16" height="16" viewBox="0 0 16 16" fill="#fff"><path d="M0 2.300 6.500 1.400v6.200H0zM7.300 1.300 16 0v7.600H7.300zM0 8.400h6.500v6.200L0 13.700zM7.300 8.400H16V16l-8.700-1.300z" /></svg></TaskButton>
    <TaskSearch>
      <svg width="16" height="16" viewBox="0 0 16 16" fill="none" stroke="#222" strokeWidth="1.300"><circle cx="10.300" cy="5.700" r="5" /><path d="M6.800 9.200.5 15.500" /></svg>
      <TaskSearchInput aria-label="Type here to search" placeholder="Type here to search" />
      <Sparkles />
    </TaskSearch>
    <TaskButton $width={48} aria-label="Task view"><Icon w={1.2} d="M1 0v3h10V0M1 5.500h10v5.500H1zM1 16v-3h10v3M15 1v3M15 9v6M13.800 6.500h2.400" /></TaskButton>
    <TaskButton $width={52} aria-label="Copilot"><CopilotIcon /></TaskButton>
    <TaskButton $width={48} aria-label="Edge"><EdgeIcon /></TaskButton>
    <TaskButton aria-label="File Explorer"><FolderIcon /></TaskButton>
    <TaskButton aria-label="Microsoft Store"><StoreIcon /></TaskButton>
    <TaskButton aria-label="Outlook"><OutlookIcon /></TaskButton>
    <TaskButton aria-label="Chrome" $active $open><ChromeIcon person="dark" /></TaskButton>
    <TaskButton aria-label="Chrome, second profile" $open><ChromeIcon person="orange" /></TaskButton>
    <Tray>
      <Weather>
        <svg width="20" height="20"><defs><linearGradient id="sun" x1="0" y1="0" x2="1" y2="1"><stop offset="0" stopColor="#fcbb20" /><stop offset="1" stopColor="#f07c12" /></linearGradient></defs><circle cx="10" cy="10" r="10" fill="url(#sun)" /></svg>
        {'25°C  Sunny'}
      </Weather>
      <TaskButton $width={24} aria-label="Show hidden icons"><Icon size={12} box={12} w={1.3} d="M.5 8.500 6 3l5.500 5.500" /></TaskButton>
      <TaskButton $width={24} aria-label="Meet now"><Icon w={1.2} d="M3 4.500h7.500v7H3zM10.500 7l3-2v6l-3-2M4.500 1.500q3-1.500 6 0M4.500 14.500q3 1.500 6 0" /></TaskButton>
      <TaskButton $width={24} aria-label="Battery"><Icon w={1.2} d="M5 5.500h9.500v6H4V8M15.500 7v3M1 2v2q0 2 1.500 2T4 4V2zM2.500 6v4M7 7.500h2V10H7z" /></TaskButton>
      <TaskButton $width={24} aria-label="Network"><Icon w={1.1} d="M2 14C2 8 7 3 14 2.500M5 14.500C5 10 9 6 14 5.500M8 14.500C8 11.500 11 9 14 8.500M11 14.500C11 13 12 12 14 11.500" /></TaskButton>
      <TaskButton $width={23} aria-label="Volume"><Icon size={17} box={17} w={1.2} d="M1 6h2.500L7 3v11l-3.500-3H1zM9 6.500q1.500 2 0 4M11 4.500q3.300 4 0 8M13.500 2.500q5 6 0 12" /></TaskButton>
      <Clock>4:15 PM<br />1/20/2026</Clock>
      <TaskButton $width={38} aria-label="Notifications"><Icon w={1.2} d="M.5 1h15v11.500h-5L8 15l-2.500-2.500h-5z" /></TaskButton>
      <ShowDesktop />
    </Tray>
  </Taskbar>
);

export default function App() {
  return (
    <Desktop>
      <GlobalStyle />
      <Browser />
      <Viewport>
        <Page>
          <ShopHeader />
          <ProductCard>
            <ProductTitle>Boys Black Bracelet <BengaliName>কম দামে স্টাইলিশ কালো ব্রেসলেট</BengaliName></ProductTitle>
          </ProductCard>
          <ShopFooter />
          <ToTop aria-label="Back to top"><Icon size={14} box={14} w={1.3} d="M7 14V1M2.500 5.500 7 1l4.500 4.500" /></ToTop>
          <Activation>
            <ActivationTitle>Activate Windows</ActivationTitle>
            <p>Go to Settings to activate Windows.</p>
          </Activation>
        </Page>
        <ScrollRail>
          <svg width="9" height="6" fill="#777"><path d="M0 5.500 4.500 0 9 5.500z" /></svg>
          <ScrollThumb />
          <svg width="9" height="6" fill="#777"><path d="M0 .5 4.500 6 9 .5z" /></svg>
        </ScrollRail>
      </Viewport>
      <WindowsTaskbar />
    </Desktop>
  );
}
